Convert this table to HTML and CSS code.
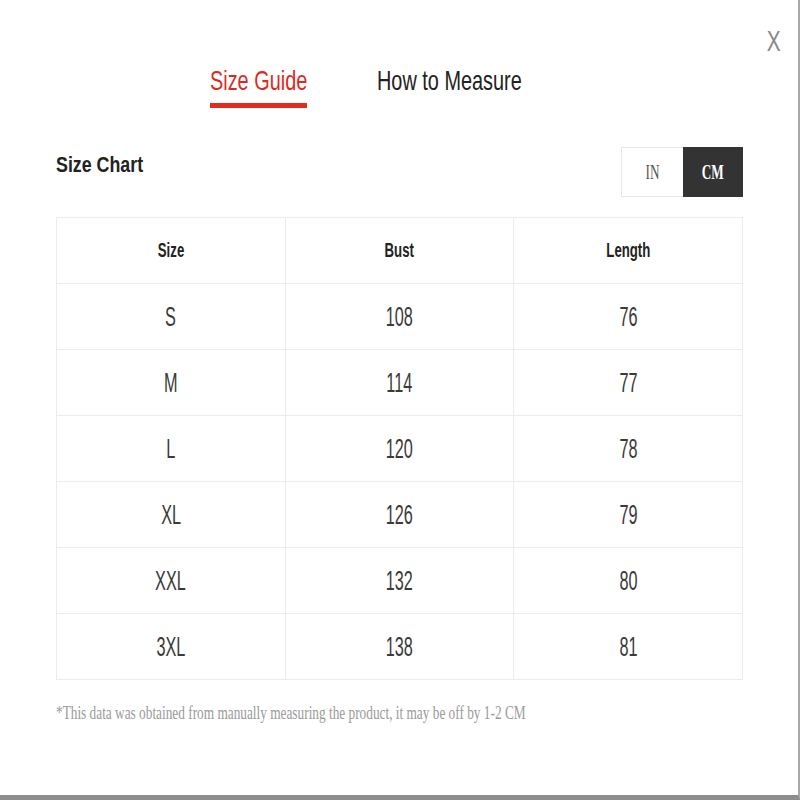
FILE: index.html
```html
<!DOCTYPE html>
<html lang="en">
<head>
<meta charset="utf-8">
<title>Size Guide</title>
<link rel="stylesheet" href="styles.css">
</head>
<body>
<div class="page">
  <div class="modal">
    <span class="close"><span class="sq sq-close">X</span></span>
    <nav class="tabs">
      <div class="tab tab-guide"><span class="sq sq-tab">Size Guide</span></div>
      <div class="tab tab-measure"><span class="sq sq-tab">How to Measure</span></div>
    </nav>
    <div class="chart-head">
      <h2 class="chart-title"><span class="sq sq-title">Size Chart</span></h2>
      <div class="units">
        <div class="unit unit-in"><span class="sq sq-unit">IN</span></div>
        <div class="unit unit-cm"><span class="sq sq-unit">CM</span></div>
      </div>
    </div>
    <table class="chart">
      <thead>
        <tr><th><span class="sq sq-th">Size</span></th><th><span class="sq sq-th">Bust</span></th><th><span class="sq sq-th">Length</span></th></tr>
      </thead>
      <tbody>
        <tr><td><span class="sq sq-td">S</span></td><td><span class="sq sq-td">108</span></td><td><span class="sq sq-td">76</span></td></tr>
        <tr><td><span class="sq sq-td">M</span></td><td><span class="sq sq-td">114</span></td><td><span class="sq sq-td">77</span></td></tr>
        <tr><td><span class="sq sq-td">L</span></td><td><span class="sq sq-td">120</span></td><td><span class="sq sq-td">78</span></td></tr>
        <tr><td><span class="sq sq-td">XL</span></td><td><span class="sq sq-td">126</span></td><td><span class="sq sq-td">79</span></td></tr>
        <tr><td><span class="sq sq-td">XXL</span></td><td><span class="sq sq-td">132</span></td><td><span class="sq sq-td">80</span></td></tr>
        <tr><td><span class="sq sq-td">3XL</span></td><td><span class="sq sq-td">138</span></td><td><span class="sq sq-td">81</span></td></tr>
      </tbody>
    </table>
    <p class="note"><span class="sq sq-note">*This data was obtained from manually measuring the product, it may be off by 1-2 CM</span></p>
  </div>
</div>
</body>
</html>
```

FILE: styles.css
```css
* { box-sizing: border-box; }
html, body { margin: 0; padding: 0; background: #fff; }
body { font-family: "Liberation Sans", Arial, sans-serif; color: #333; }

.page {
  width: 800px;
  height: 800px;
  border-right: 2px solid #a8a8a8;
  border-bottom: 5px solid #8e8e8e;
  overflow: hidden;
}

.modal {
  position: relative;
  height: 100%;
  padding: 64px 55px 0 56px;
}

.sq {
  display: inline-block;
  white-space: nowrap;
  transform-origin: center;
}

.close {
  position: absolute;
  top: 24px;
  left: 760px;
  width: 28px;
  text-align: center;
  font-size: 29px;
  line-height: 34px;
  color: #8a8a8a;
}
.sq-close { transform: scaleX(0.72); }

.tabs {
  display: flex;
  gap: 70px;
  padding-left: 154px;
}
.tab {
  flex: none;
  font-size: 28px;
  line-height: 34px;
  padding-bottom: 5px;
  border-bottom: 5px solid transparent;
}
.sq-tab { transform: scaleX(0.71); transform-origin: left; }
.tab-guide { width: 97px; color: #dd2a1f; border-bottom-color: #e02b20; }
.tab-measure { width: 146px; color: #222; }

.chart-head {
  display: flex;
  justify-content: space-between;
  align-items: flex-start;
  margin-top: 39px;
}
.chart-title {
  margin: 0;
  padding-top: 5px;
  font-size: 22px;
  line-height: 26px;
  font-weight: bold;
  color: #222;
}
.sq-title { transform: scaleX(0.81); transform-origin: left; }

.units {
  display: flex;
  height: 50px;
}
.unit {
  display: flex;
  align-items: center;
  justify-content: center;
  font-family: "Liberation Serif", "Times New Roman", serif;
  font-size: 20px;
}
.unit-in {
  width: 62px;
  border: 1px solid #e6e6e6;
  border-right: none;
  color: #555;
}
.unit-cm {
  width: 60px;
  background: #333;
  color: #fff;
  font-weight: bold;
}
.sq-unit { transform: scaleX(0.66); }

.chart {
  width: 687px;
  margin-top: 20px;
  border-collapse: collapse;
  table-layout: fixed;
}
.chart th, .chart td {
  border: 1px solid #ececec;
  height: 66px;
  padding: 0;
  text-align: center;
  vertical-align: middle;
}
.chart th {
  font-size: 20px;
  font-weight: bold;
  color: #222;
}
.chart td {
  font-size: 28px;
  color: #3a3a3a;
}
.sq-th { transform: scaleX(0.66); }
.sq-td { transform: scaleX(0.58); }

.note {
  margin: 22px 0 0;
  font-family: "Liberation Serif", "Times New Roman", serif;
  font-size: 19px;
  line-height: 22px;
  color: #9a9a9a;
}
.sq-note { transform: scaleX(0.70); transform-origin: left; }
```
